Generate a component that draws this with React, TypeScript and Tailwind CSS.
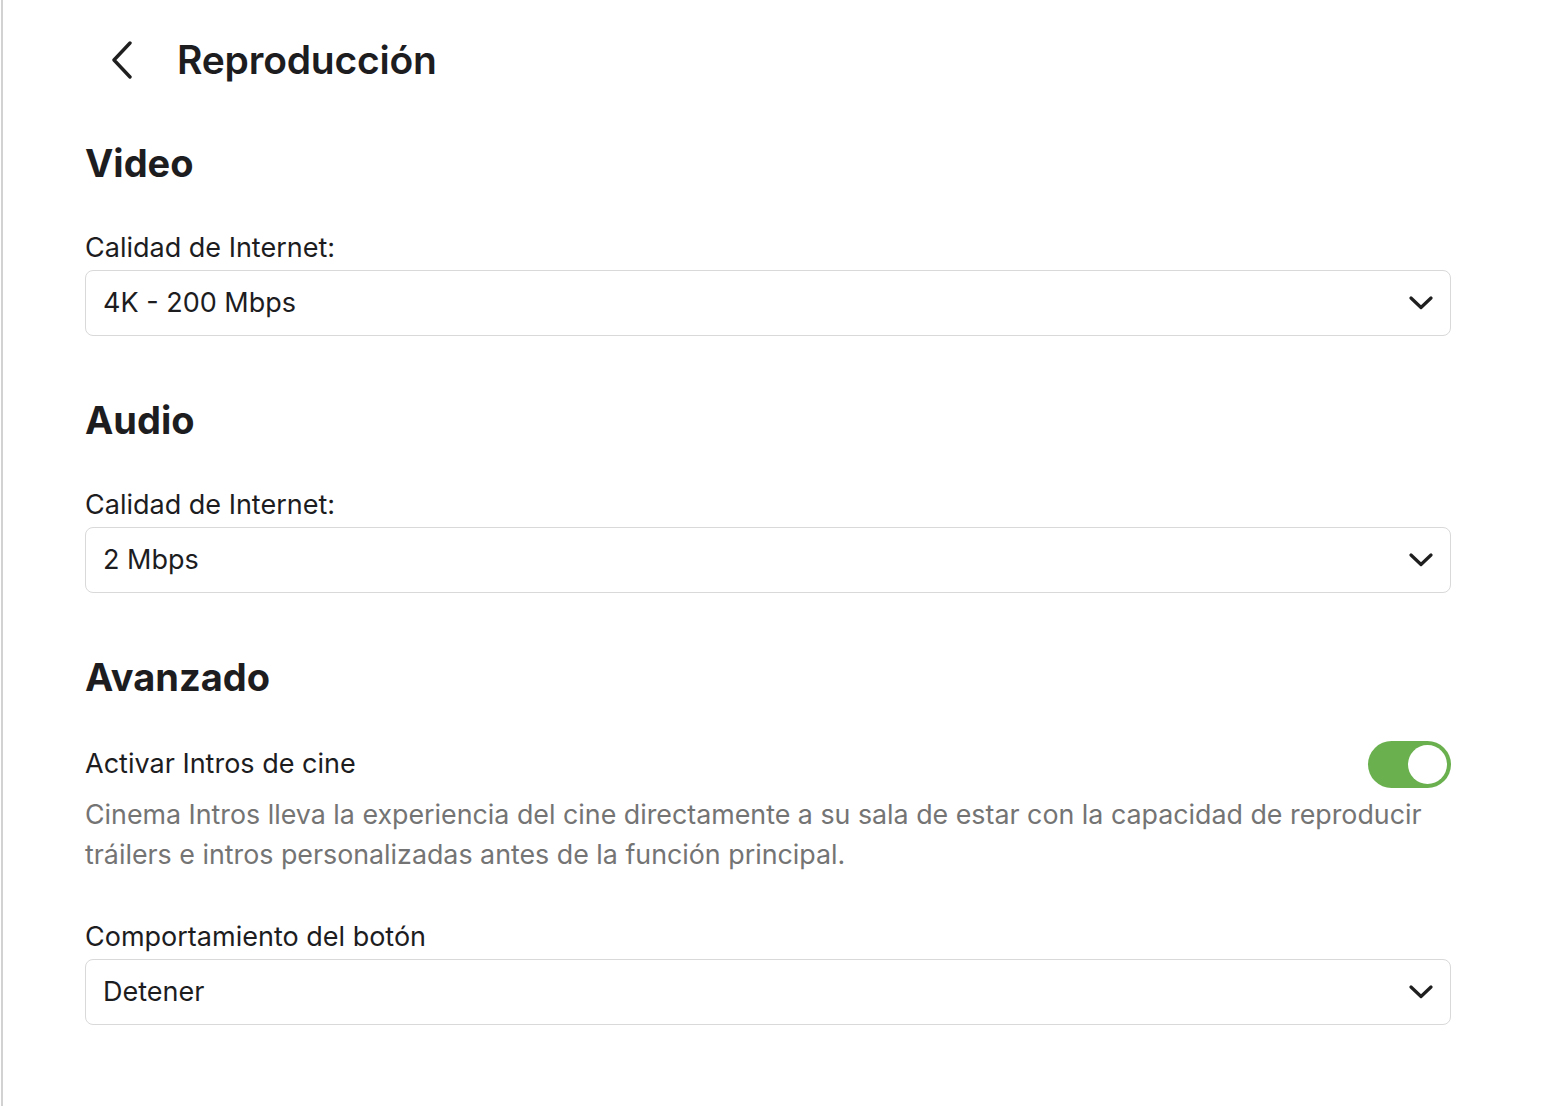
import React, { useState } from 'react';

// --- small inline icons ---
const ChevronDown: React.FC = () => (
  <svg width="24" height="14" viewBox="0 0 24 14" fill="none">
    <path d="M2 2 L12 11.5 L22 2" stroke="#1f1f1f" strokeWidth="3.2" strokeLinecap="round" strokeLinejoin="round" />
  </svg>
);

const ChevronLeft: React.FC = () => (
  <svg width="24" height="38" viewBox="0 0 24 38" fill="none">
    <path d="M20 2 L4 19 L20 36" stroke="#1f1f1f" strokeWidth="3.4" strokeLinecap="round" strokeLinejoin="round" />
  </svg>
);

interface SelectProps {
  label: string;
  value: string;
}

const SelectField: React.FC<SelectProps> = ({ label, value }) => (
  <div>
    <div className="text-[27px] leading-[32px] text-[#1d1d1f]">{label}</div>
    <div className="mt-[6px] h-[66px] flex items-center justify-between border border-[#d9d9d9] rounded-[8px] pl-[17px] pr-[17px] bg-white">
      <span className="text-[27px] text-[#1d1d1f]">{value}</span>
      <ChevronDown />
    </div>
  </div>
);

const Toggle: React.FC<{ on: boolean; onChange: () => void }> = ({ on, onChange }) => (
  <button
    onClick={onChange}
    className={`relative w-[83px] h-[47px] rounded-full ${on ? 'bg-[#6ab04e]' : 'bg-[#d4d4d4]'}`}
  >
    <span
      className={`absolute top-[4px] w-[39px] h-[39px] rounded-full bg-white ${on ? 'left-[40px]' : 'left-[4px]'}`}
    />
  </button>
);

export default function App() {
  const [intros, setIntros] = useState(true);

  return (
    <div
      className="min-h-screen bg-white ml-px border-l-2 border-[#d2d2d2]"
      style={{ fontFamily: 'Inter, "Noto Sans", sans-serif' }}
    >
      <div className="pl-[82px] pr-[117px] pt-[36px] pb-[40px] text-[#1d1d1f]">
        {/* header */}
        <div className="flex items-center h-[48px]">
          <div className="ml-[25px] w-[67px]"><ChevronLeft /></div>
          <h1 className="text-[39px] font-semibold tracking-[-0.2px]">Reproducción</h1>
        </div>

        {/* Video */}
        <h2 className="mt-[55px] text-[38px] leading-[48px] font-bold">Video</h2>
        <div className="mt-[45px]">
          <SelectField label="Calidad de Internet:" value="4K - 200 Mbps" />
        </div>

        {/* Audio */}
        <h2 className="mt-[60px] text-[38px] leading-[48px] font-bold">Audio</h2>
        <div className="mt-[45px]">
          <SelectField label="Calidad de Internet:" value="2 Mbps" />
        </div>

        {/* Avanzado */}
        <h2 className="mt-[60px] text-[38px] leading-[48px] font-bold">Avanzado</h2>
        <div className="mt-[40px] flex items-center justify-between">
          <span className="text-[27px]">Activar Intros de cine</span>
          <Toggle on={intros} onChange={() => setIntros(!intros)} />
        </div>
        <p className="mt-[6px] text-[26.8px] leading-[40px] text-[#747474]">
          Cinema Intros lleva la experiencia del cine directamente a su sala de estar con la capacidad de reproducir tráilers e intros personalizadas antes de la función principal.
        </p>
        <div className="mt-[47px]">
          <SelectField label="Comportamiento del botón" value="Detener" />
        </div>
      </div>
    </div>
  );
}
